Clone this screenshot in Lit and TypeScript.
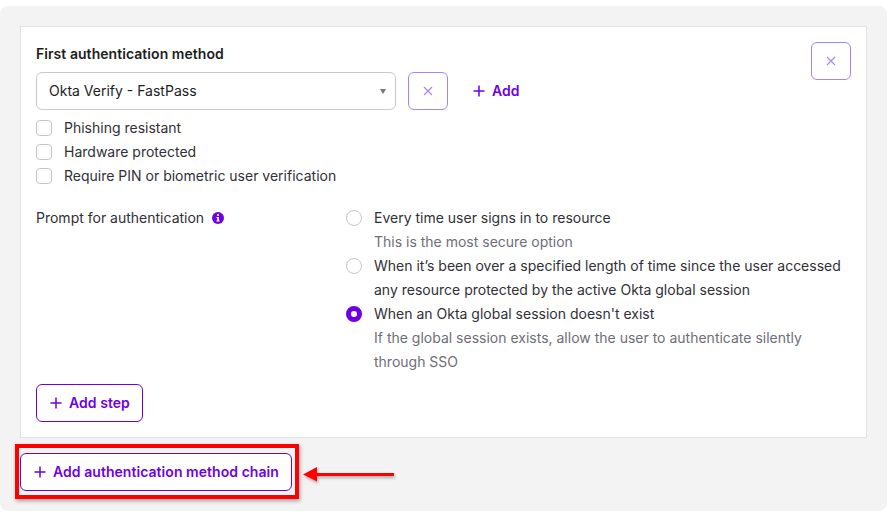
import { html, css, LitElement, svg } from "lit";
import { customElement } from "lit/decorators.js";

const closeIcon = svg`<svg class="x" width="10" height="10" viewBox="0 0 10 10" fill="none"><path d="M1 1l8 8M9 1l-8 8" stroke="#a684f5" stroke-width="1.1"/></svg>`;
const plusIcon = svg`<svg class="plus" width="12" height="12" viewBox="0 0 12 12" fill="none"><path d="M6 0.5v11M0.5 6h11" stroke="#6e00e6" stroke-width="1.5"/></svg>`;

@customElement("app-root")
export class AppRoot extends LitElement {
  static styles = css`
    :host {
      display: block;
      position: relative;
      width: 894px;
      height: 517px;
      padding-top: 6px;
      box-sizing: border-box;
      background: #fff;
      font-family: Inter, "Liberation Sans", sans-serif;
      font-size: 14px;
      line-height: 24px;
      color: #1d1d21;
    }
    .panel {
      width: 887px;
      height: 505px;
      box-sizing: border-box;
      padding: 20px 20px 0;
      background: #f3f3f3;
      border-radius: 8px;
    }
    .card {
      width: 847px;
      height: 412px;
      box-sizing: border-box;
      padding: 15px;
      background: #fff;
      border: 1px solid #e1e1e1;
      display: flex;
      flex-direction: column;
      gap: 18px;
    }
    .top {
      display: flex;
      justify-content: space-between;
      align-items: flex-start;
    }
    .method {
      display: flex;
      flex-direction: column;
      gap: 6px;
    }
    .title {
      font-weight: 600;
      letter-spacing: 0.05px;
    }
    .picker {
      display: flex;
      align-items: center;
      gap: 12px;
    }
    .select {
      width: 360px;
      height: 38px;
      box-sizing: border-box;
      padding: 0 9px 0 12px;
      border: 1px solid #c9c9c9;
      border-radius: 6px;
      display: flex;
      align-items: center;
      justify-content: space-between;
    }
    .caret {
      width: 0;
      height: 0;
      border-left: 3.5px solid transparent;
      border-right: 3.5px solid transparent;
      border-top: 5px solid #777;
      margin-top: 1px;
    }
    .icon-btn {
      width: 40px;
      height: 38px;
      padding: 0;
      background: #fff;
      border: 1px solid #a684f5;
      border-radius: 6px;
      display: flex;
      align-items: center;
      justify-content: center;
    }
    button {
      font: inherit;
      color: #6e00e6;
      font-weight: 600;
      letter-spacing: 0.05px;
      white-space: nowrap;
    }
    .text-btn {
      display: flex;
      align-items: center;
      gap: 7px;
      margin-left: 13px;
      padding: 0;
      background: none;
      border: none;
    }
    .checks {
      display: flex;
      flex-direction: column;
    }
    .check {
      display: flex;
      align-items: center;
      gap: 12px;
      color: #303036;
    }
    .box {
      width: 16px;
      height: 16px;
      box-sizing: border-box;
      border: 1.5px solid #c6c6c6;
      border-radius: 4px;
      background: #fff;
    }
    .prompt {
      display: flex;
    }
    .prompt-label {
      width: 310px;
      display: flex;
      align-items: flex-start;
      gap: 8px;
      color: #303036;
    }
    .info {
      margin-top: 6px;
    }
    .options {
      width: 498px;
      display: flex;
      flex-direction: column;
    }
    .option {
      display: grid;
      grid-template-columns: 16px 1fr;
      column-gap: 12px;
      color: #303036;
    }
    .radio {
      width: 16px;
      height: 16px;
      margin-top: 4px;
      box-sizing: border-box;
      border: 1.5px solid #c6c6c6;
      border-radius: 50%;
    }
    .radio.on {
      border: 5px solid #6e00e6;
    }
    .hint {
      grid-column: 2;
      color: #6e6e78;
    }
    .outline {
      height: 38px;
      box-sizing: border-box;
      background: #fff;
      border: 1px solid #6e00e6;
      border-radius: 6px;
      display: inline-flex;
      align-items: center;
      justify-content: flex-start;
      gap: 7px;
      padding: 0 0 0 13px;
    }
    .add-step {
      align-self: flex-start;
      margin-top: -8px;
      width: 107px;
    }
    .add-chain {
      margin-top: 15px;
      width: 272px;
    }
    .mark {
      position: absolute;
      left: 15px;
      top: 444px;
      width: 284px;
      height: 55px;
      box-sizing: border-box;
      border: 4px solid #fe0000;
      box-shadow: 1px 2px 4px rgba(0, 0, 0, 0.35);
    }
    .arrow {
      position: absolute;
      left: 300px;
      top: 462px;
    }
  `;

  render() {
    return html`
      <div class="panel">
        <div class="card">
          <div class="top">
            <div class="method">
              <div class="title">First authentication method</div>
              <div class="picker">
                <div class="select">
                  <span>Okta Verify - FastPass</span>
                  <span class="caret"></span>
                </div>
                <button class="icon-btn">${closeIcon}</button>
                <button class="text-btn">${plusIcon} Add</button>
              </div>
              <div class="checks">
                ${[
                  "Phishing resistant",
                  "Hardware protected",
                  "Require PIN or biometric user verification",
                ].map(
                  (label) =>
                    html`<div class="check"><span class="box"></span>${label}</div>`,
                )}
              </div>
            </div>
            <button class="icon-btn">${closeIcon}</button>
          </div>
          <div class="prompt">
            <div class="prompt-label">
              Prompt for authentication
              <svg class="info" width="12" height="12" viewBox="0 0 12 12">
                <circle cx="6" cy="6" r="6" fill="#6e00e6" />
                <rect x="5.1" y="2.2" width="1.8" height="1.7" fill="#fff" />
                <path d="M4.4 5h2.5v3.6h.8v1H4.4v-1h.8V6h-.8z" fill="#fff" />
              </svg>
            </div>
            <div class="options">
              <div class="option">
                <span class="radio"></span>
                <span>Every time user signs in to resource</span>
                <span class="hint">This is the most secure option</span>
              </div>
              <div class="option">
                <span class="radio"></span>
                <span
                  >When it’s been over a specified length of time since the user
                  accessed any resource protected by the active Okta global
                  session</span
                >
              </div>
              <div class="option">
                <span class="radio on"></span>
                <span>When an Okta global session doesn't exist</span>
                <span class="hint"
                  >If the global session exists, allow the user to authenticate
                  silently through SSO</span
                >
              </div>
            </div>
          </div>
          <button class="outline add-step">${plusIcon} Add step</button>
        </div>
        <button class="outline add-chain">
          ${plusIcon} Add authentication method chain
        </button>
      </div>
      <div class="mark"></div>
      <svg class="arrow" width="98" height="26" viewBox="0 0 98 26">
        <defs>
          <filter id="s" x="-10%" y="-50%" width="120%" height="220%">
            <feDropShadow dx="1" dy="2" stdDeviation="1.5" flood-opacity="0.3" />
          </filter>
        </defs>
        <g filter="url(#s)" fill="#fe0000">
          <path d="M3 12.5L17 5V11H94V14H17V19.5z" />
        </g>
      </svg>
    `;
  }
}
